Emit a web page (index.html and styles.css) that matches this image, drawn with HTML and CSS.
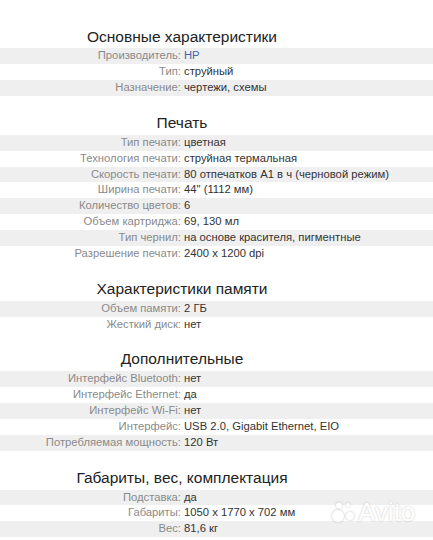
FILE: index.html
```html
<!DOCTYPE html>
<html lang="ru">
<head>
<meta charset="utf-8">
<link rel="stylesheet" href="styles.css">
</head>
<body>
<div class="page">
  <section class="sec">
    <h2 class="sec-title">Основные характеристики</h2>
    <div class="row"><span class="lbl">Производитель:</span><span class="val link">HP</span></div>
    <div class="row"><span class="lbl">Тип:</span><span class="val">струйный</span></div>
    <div class="row"><span class="lbl">Назначение:</span><span class="val">чертежи, схемы</span></div>
  </section>
  <section class="sec">
    <h2 class="sec-title">Печать</h2>
    <div class="row"><span class="lbl">Тип печати:</span><span class="val">цветная</span></div>
    <div class="row"><span class="lbl">Технология печати:</span><span class="val">струйная термальная</span></div>
    <div class="row"><span class="lbl">Скорость печати:</span><span class="val">80 отпечатков А1 в ч (черновой режим)</span></div>
    <div class="row"><span class="lbl">Ширина печати:</span><span class="val">44" (1112 мм)</span></div>
    <div class="row"><span class="lbl">Количество цветов:</span><span class="val">6</span></div>
    <div class="row"><span class="lbl">Объем картриджа:</span><span class="val">69, 130 мл</span></div>
    <div class="row"><span class="lbl">Тип чернил:</span><span class="val">на основе красителя, пигментные</span></div>
    <div class="row"><span class="lbl">Разрешение печати:</span><span class="val">2400 x 1200 dpi</span></div>
  </section>
  <section class="sec">
    <h2 class="sec-title">Характеристики памяти</h2>
    <div class="row"><span class="lbl">Объем памяти:</span><span class="val">2 ГБ</span></div>
    <div class="row"><span class="lbl">Жесткий диск:</span><span class="val">нет</span></div>
  </section>
  <section class="sec">
    <h2 class="sec-title">Дополнительные</h2>
    <div class="row"><span class="lbl">Интерфейс Bluetooth:</span><span class="val">нет</span></div>
    <div class="row"><span class="lbl">Интерфейс Ethernet:</span><span class="val">да</span></div>
    <div class="row"><span class="lbl">Интерфейс Wi-Fi:</span><span class="val">нет</span></div>
    <div class="row"><span class="lbl">Интерфейс:</span><span class="val">USB 2.0, Gigabit Ethernet, EIO</span></div>
    <div class="row"><span class="lbl">Потребляемая мощность:</span><span class="val">120 Вт</span></div>
  </section>
  <section class="sec">
    <h2 class="sec-title">Габариты, вес, комплектация</h2>
    <div class="row"><span class="lbl">Подставка:</span><span class="val">да</span></div>
    <div class="row"><span class="lbl">Габариты:</span><span class="val">1050 x 1770 x 702 мм</span></div>
    <div class="row"><span class="lbl">Вес:</span><span class="val">81,6 кг</span></div>
  </section>
</div>
<div class="avito">
  <svg class="avito-dots" width="26" height="22" viewBox="0 0 26 22">
    <circle cx="7" cy="15" r="6" />
    <circle cx="19" cy="15" r="4" />
    <circle cx="8" cy="4.5" r="3" />
    <circle cx="17" cy="4" r="2" />
  </svg>
  <span class="avito-text">Avito</span>
</div>
</body>
</html>
```
FILE: styles.css
```css
html, body {
  margin: 0;
  padding: 0;
  background: #ffffff;
}
body {
  font-family: "Liberation Sans", Arial, sans-serif;
  width: 433px;
  height: 540px;
  overflow: hidden;
  position: relative;
}
.page {
  padding-top: 9.5px;
}
.sec-title {
  margin: 0;
  width: 364px;
  text-align: center;
  font-weight: normal;
  font-size: 15.5px;
  line-height: 20px;
  padding: 17px 0 1.8px;
  color: #222;
}
.row {
  display: grid;
  grid-template-columns: 181px 1fr;
  height: 15.9px;
  line-height: 15.9px;
  font-size: 11.25px;
}
.row:nth-of-type(odd) {
  background: #efefef;
}
.lbl {
  text-align: right;
  color: #8a8a8a;
  white-space: nowrap;
}
.val {
  padding-left: 3px;
  color: #333;
  white-space: nowrap;
}
.val.link {
  color: #4a62a8;
}
.avito {
  position: absolute;
  left: 331px;
  top: 499px;
  display: flex;
  align-items: center;
  gap: 1px;
}
.avito-dots circle {
  fill: #ffffff;
}
.avito-dots {
  filter: drop-shadow(0 0 1.2px rgba(0,0,0,0.25));
}
.avito-text {
  font-family: "Liberation Sans", Arial, sans-serif;
  font-size: 26px;
  line-height: 26px;
  color: #ffffff;
  text-shadow: 0 0 2px rgba(0,0,0,0.25);
}
```
